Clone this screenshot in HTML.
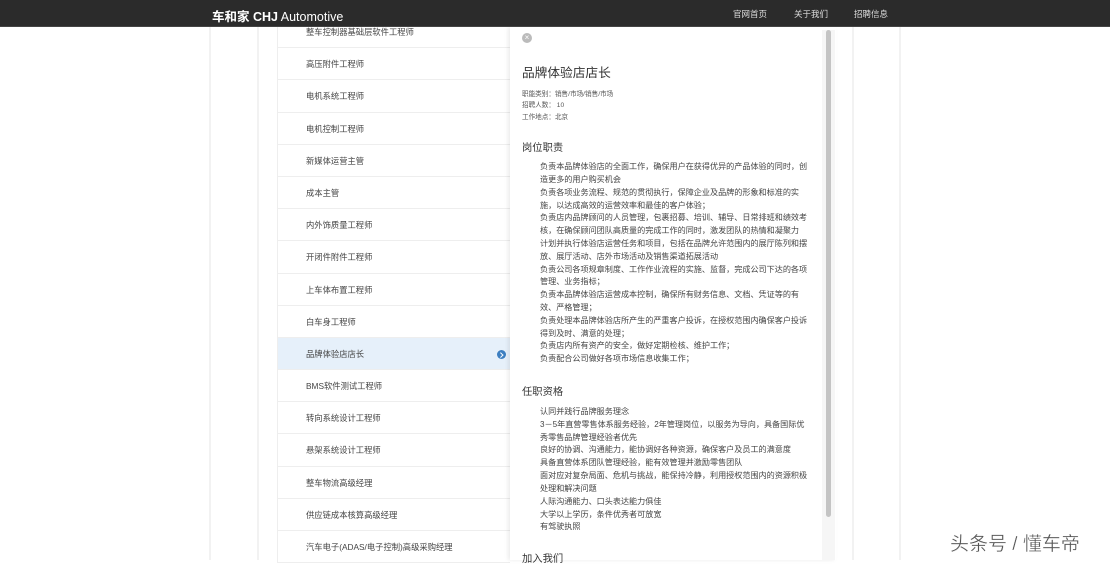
<!DOCTYPE html>
<html><head><meta charset="utf-8"><style>
*{margin:0;padding:0;box-sizing:border-box}
body{width:1110px;height:560px;overflow:hidden;background:#fff;position:relative;font-family:"Liberation Sans","Noto Sans CJK SC",sans-serif;color:#444}
.vl{position:absolute;top:27px;bottom:0;width:2px;background:#f2f2f2}
.hdr{position:absolute;left:0;top:0;width:1110px;height:27px;background:#2b2b2b;border-bottom:1px solid #444}
.logo{position:absolute;left:212px;top:6px;color:#fff;font-size:12.5px;white-space:nowrap}
.nav{position:absolute;top:8px;color:#ddd;font-size:8.5px}
.list{position:absolute;left:277px;top:16px;width:233px;border-left:1px solid #eee}
.item{height:32.2px;border-bottom:1px solid #eee;font-size:8.3px;line-height:32px;padding-left:28px;color:#444;position:relative;white-space:nowrap}
.sel{background:#e6f0fa}
.dot{position:absolute;left:219px;top:12px;width:9px;height:9px;border-radius:50%;background:#3d7fc1}
.dot:after{content:"";position:absolute;left:2px;top:3px;width:2.5px;height:2.5px;border-right:1.2px solid #fff;border-top:1.2px solid #fff;transform:rotate(45deg)}
.panel{position:absolute;left:510px;top:27px;width:326px;height:533px;background:#fff;box-shadow:-2px 0 4px rgba(0,0,0,.08)}
.t{position:absolute;white-space:nowrap}
.ln{position:absolute;left:540px;font-size:8.1px;white-space:nowrap;color:#444}
</style></head><body>
<div class="vl" style="left:209px"></div>
<div class="vl" style="left:257px"></div>
<div class="vl" style="left:852px"></div>
<div class="vl" style="left:899px"></div>
<div class="list">
<div class="item">整车控制器基础层软件工程师</div>
<div class="item">高压附件工程师</div>
<div class="item">电机系统工程师</div>
<div class="item">电机控制工程师</div>
<div class="item">新媒体运营主管</div>
<div class="item">成本主管</div>
<div class="item">内外饰质量工程师</div>
<div class="item">开闭件附件工程师</div>
<div class="item">上车体布置工程师</div>
<div class="item">白车身工程师</div>
<div class="item sel">品牌体验店店长<span class="dot"></span></div>
<div class="item">BMS软件测试工程师</div>
<div class="item">转向系统设计工程师</div>
<div class="item">悬架系统设计工程师</div>
<div class="item">整车物流高级经理</div>
<div class="item">供应链成本核算高级经理</div>
<div class="item">汽车电子(ADAS/电子控制)高级采购经理</div>
</div>
<div class="panel">
<div style="position:absolute;left:12px;top:6px;width:10px;height:10px;border-radius:50%;background:#bbb;color:#fff;font-size:8px;line-height:10px;text-align:center">×</div>
<div style="position:absolute;left:312px;top:3px;width:13px;height:530px;background:#f6f6f6"></div>
<div style="position:absolute;left:316px;top:3px;width:5px;height:487px;border-radius:3px;background:#c4c4c4"></div>
</div>
<div class="t" style="left:522px;top:62px;font-size:12.7px;color:#333">品牌体验店店长</div>
<div class="t" style="left:522px;top:88px;font-size:6.6px;color:#555">职能类别：销售/市场/销售/市场</div>
<div class="t" style="left:522px;top:99px;font-size:6.6px;color:#555">招聘人数： 10</div>
<div class="t" style="left:522px;top:111px;font-size:6.6px;color:#555">工作地点：北京</div>
<div class="t" style="left:522px;top:139px;font-size:10.3px;color:#333">岗位职责</div>
<div class="ln" style="top:161px">负责本品牌体验店的全面工作，确保用户在获得优异的产品体验的同时，创</div>
<div class="ln" style="top:174px">造更多的用户购买机会</div>
<div class="ln" style="top:187px">负责各项业务流程、规范的贯彻执行，保障企业及品牌的形象和标准的实</div>
<div class="ln" style="top:200px">施，以达成高效的运营效率和最佳的客户体验；</div>
<div class="ln" style="top:212px">负责店内品牌顾问的人员管理，包裹招募、培训、辅导、日常排班和绩效考</div>
<div class="ln" style="top:225px">核，在确保顾问团队高质量的完成工作的同时，激发团队的热情和凝聚力</div>
<div class="ln" style="top:238px">计划并执行体验店运营任务和项目，包括在品牌允许范围内的展厅陈列和摆</div>
<div class="ln" style="top:251px">放、展厅活动、店外市场活动及销售渠道拓展活动</div>
<div class="ln" style="top:264px">负责公司各项规章制度、工作作业流程的实施、监督，完成公司下达的各项</div>
<div class="ln" style="top:276px">管理、业务指标；</div>
<div class="ln" style="top:289px">负责本品牌体验店运营成本控制，确保所有财务信息、文档、凭证等的有</div>
<div class="ln" style="top:302px">效、严格管理；</div>
<div class="ln" style="top:315px">负责处理本品牌体验店所产生的严重客户投诉，在授权范围内确保客户投诉</div>
<div class="ln" style="top:328px">得到及时、满意的处理；</div>
<div class="ln" style="top:340px">负责店内所有资产的安全，做好定期检核、维护工作；</div>
<div class="ln" style="top:353px">负责配合公司做好各项市场信息收集工作；</div>
<div class="t" style="left:522px;top:383px;font-size:10.3px;color:#333">任职资格</div>
<div class="ln" style="top:406px">认同并践行品牌服务理念</div>
<div class="ln" style="top:419px">3－5年直营零售体系服务经验，2年管理岗位，以服务为导向，具备国际优</div>
<div class="ln" style="top:432px">秀零售品牌管理经验者优先</div>
<div class="ln" style="top:444px">良好的协调、沟通能力，能协调好各种资源，确保客户及员工的满意度</div>
<div class="ln" style="top:457px">具备直营体系团队管理经验，能有效管理并激励零售团队</div>
<div class="ln" style="top:470px">面对应对复杂局面、危机与挑战，能保持冷静，利用授权范围内的资源积极</div>
<div class="ln" style="top:483px">处理和解决问题</div>
<div class="ln" style="top:496px">人际沟通能力、口头表达能力俱佳</div>
<div class="ln" style="top:509px">大学以上学历，条件优秀者可放宽</div>
<div class="ln" style="top:521px">有驾驶执照</div>
<div class="t" style="left:522px;top:550px;font-size:10.3px;color:#333">加入我们</div>
<div class="hdr">
<div class="logo"><b>车和家 CHJ</b> Automotive</div>
<div class="nav" style="left:733px">官网首页</div>
<div class="nav" style="left:794px">关于我们</div>
<div class="nav" style="left:854px">招聘信息</div>
</div>
<div class="t" style="left:950px;top:529px;font-size:19px;color:#555;-webkit-text-stroke:0.3px #fff;text-shadow:0 0 2px #fff">头条号 / 懂车帝</div>
</body></html>
